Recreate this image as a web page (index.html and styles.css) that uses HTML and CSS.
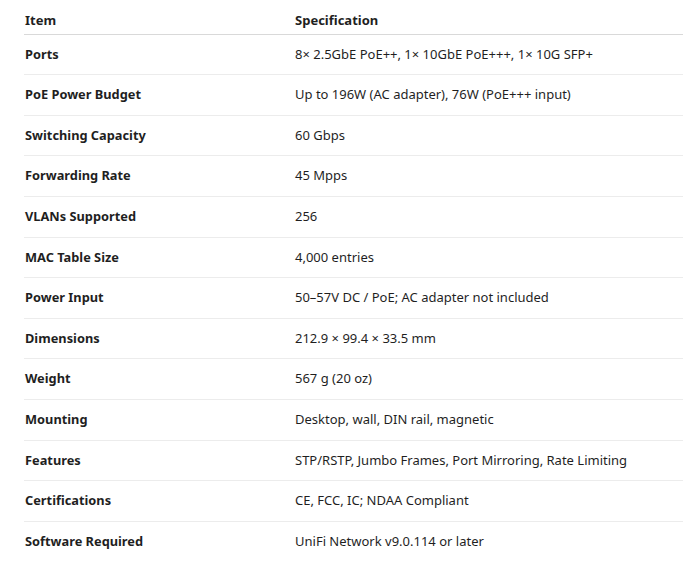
FILE: index.html
```html
<!DOCTYPE html>
<html>
<head>
<meta charset="utf-8">
<link rel="stylesheet" href="styles.css">
</head>
<body>
<table class="spec">
  <thead>
    <tr><th>Item</th><th>Specification</th></tr>
  </thead>
  <tbody>
    <tr><td class="k">Ports</td><td>8× 2.5GbE PoE++, 1× 10GbE PoE+++, 1× 10G SFP+</td></tr>
    <tr><td class="k">PoE Power Budget</td><td>Up to 196W (AC adapter), 76W (PoE+++ input)</td></tr>
    <tr><td class="k">Switching Capacity</td><td>60 Gbps</td></tr>
    <tr><td class="k">Forwarding Rate</td><td>45 Mpps</td></tr>
    <tr><td class="k">VLANs Supported</td><td>256</td></tr>
    <tr><td class="k">MAC Table Size</td><td>4,000 entries</td></tr>
    <tr><td class="k">Power Input</td><td>50–57V DC / PoE; AC adapter not included</td></tr>
    <tr><td class="k">Dimensions</td><td>212.9 × 99.4 × 33.5 mm</td></tr>
    <tr><td class="k">Weight</td><td>567 g (20 oz)</td></tr>
    <tr><td class="k">Mounting</td><td>Desktop, wall, DIN rail, magnetic</td></tr>
    <tr><td class="k">Features</td><td>STP/RSTP, Jumbo Frames, Port Mirroring, Rate Limiting</td></tr>
    <tr><td class="k">Certifications</td><td>CE, FCC, IC; NDAA Compliant</td></tr>
    <tr><td class="k">Software Required</td><td>UniFi Network v9.0.114 or later</td></tr>
  </tbody>
</table>
</body>
</html>
```
FILE: styles.css
```css
html, body {
  margin: 0;
  padding: 0;
  background: #ffffff;
}
body {
  padding: 11px 0 0 24px;
  font-family: "Noto Sans", "Open Sans", sans-serif;
  font-size: 13px;
  color: #1f1f1f;
}
.spec {
  border-collapse: collapse;
  table-layout: fixed;
  width: 659px;
}
.spec th {
  text-align: left;
  font-weight: 700;
  padding: 0 0 3px 1px;
  line-height: 19.6px;
  border-bottom: 1.5px solid #d9d9d9;
}
.spec th:first-child {
  width: 269px;
}
.spec td {
  padding: 10px 0 10px 1px;
  line-height: 19.6px;
  border-bottom: 1px solid #ececec;
}
.spec tbody tr:last-child td {
  border-bottom: none;
}
.spec td.k {
  font-weight: 700;
  font-size: 12.8px;
}
```
